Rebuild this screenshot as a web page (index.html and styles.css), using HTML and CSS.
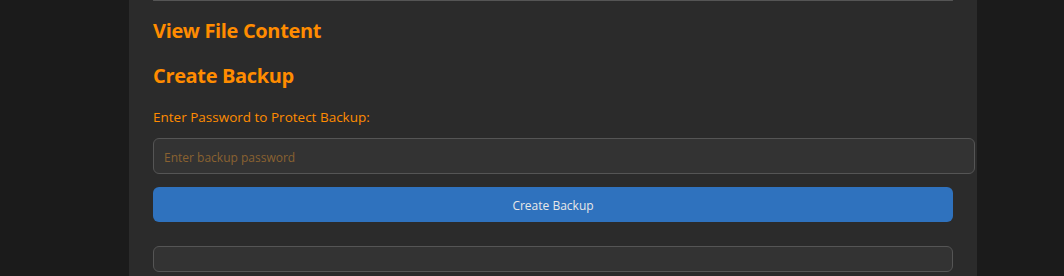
FILE: index.html
```html
<!DOCTYPE html>
<html lang="en">
<head>
<meta charset="utf-8">
<title>Backup</title>
<link rel="stylesheet" href="styles.css">
</head>
<body>
<main class="panel">
  <div class="file-box"></div>
  <h3 class="section-title first">View File Content</h3>
  <h3 class="section-title">Create Backup</h3>
  <label class="field-label" for="backup-pass">Enter Password to Protect Backup:</label>
  <input class="text-input" id="backup-pass" type="password" placeholder="Enter backup password">
  <button class="primary-btn" type="button">Create Backup</button>
  <div class="result-box"></div>
</main>
</body>
</html>
```
FILE: styles.css
```css
html, body {
  margin: 0;
  padding: 0;
  height: 100%;
  background: #1b1b1b;
  overflow: hidden;
}
.panel {
  box-sizing: border-box;
  width: 848px;
  height: 100%;
  margin-left: 129px;
  padding: 0 24px;
  background: #2b2b2b;
  display: flex;
  flex-direction: column;
  align-items: flex-start;
}
.file-box {
  align-self: stretch;
  height: 0;
  border: 1px solid #555;
  border-top: none;
  border-radius: 0 0 5px 5px;
}
.section-title {
  margin: 20px 0 0;
  font-family: "Open Sans", sans-serif;
  font-weight: 700;
  font-size: 20px;
  letter-spacing: -0.35px;
  line-height: 25px;
  color: #ff8c00;
}
.section-title.first {
  margin-top: 17px;
}
.field-label {
  margin-top: 21px;
  font-family: "Open Sans", sans-serif;
  font-size: 13.5px;
  line-height: 16px;
  color: #ff8c00;
}
.text-input {
  width: 100%;
  margin: 13px 0 0;
  padding: 2px 10px 0;
  box-sizing: content-box;
  height: 32px;
  border: 1px solid #555;
  border-radius: 6px;
  background: #333;
  color: #ddd;
  font-family: "Open Sans", sans-serif;
  font-size: 12px;
  outline: none;
}
.text-input::placeholder {
  color: #8a6231;
}
.primary-btn {
  align-self: stretch;
  margin-top: 13px;
  height: 35px;
  padding: 2px 0 0;
  border: none;
  border-radius: 6px;
  background: #2f72be;
  color: #e8e8e8;
  font-family: "Open Sans", sans-serif;
  font-size: 12px;
}
.result-box {
  align-self: stretch;
  margin-top: 24px;
  height: 24px;
  border: 1px solid #555;
  border-radius: 6px;
  background: #333;
}
```
